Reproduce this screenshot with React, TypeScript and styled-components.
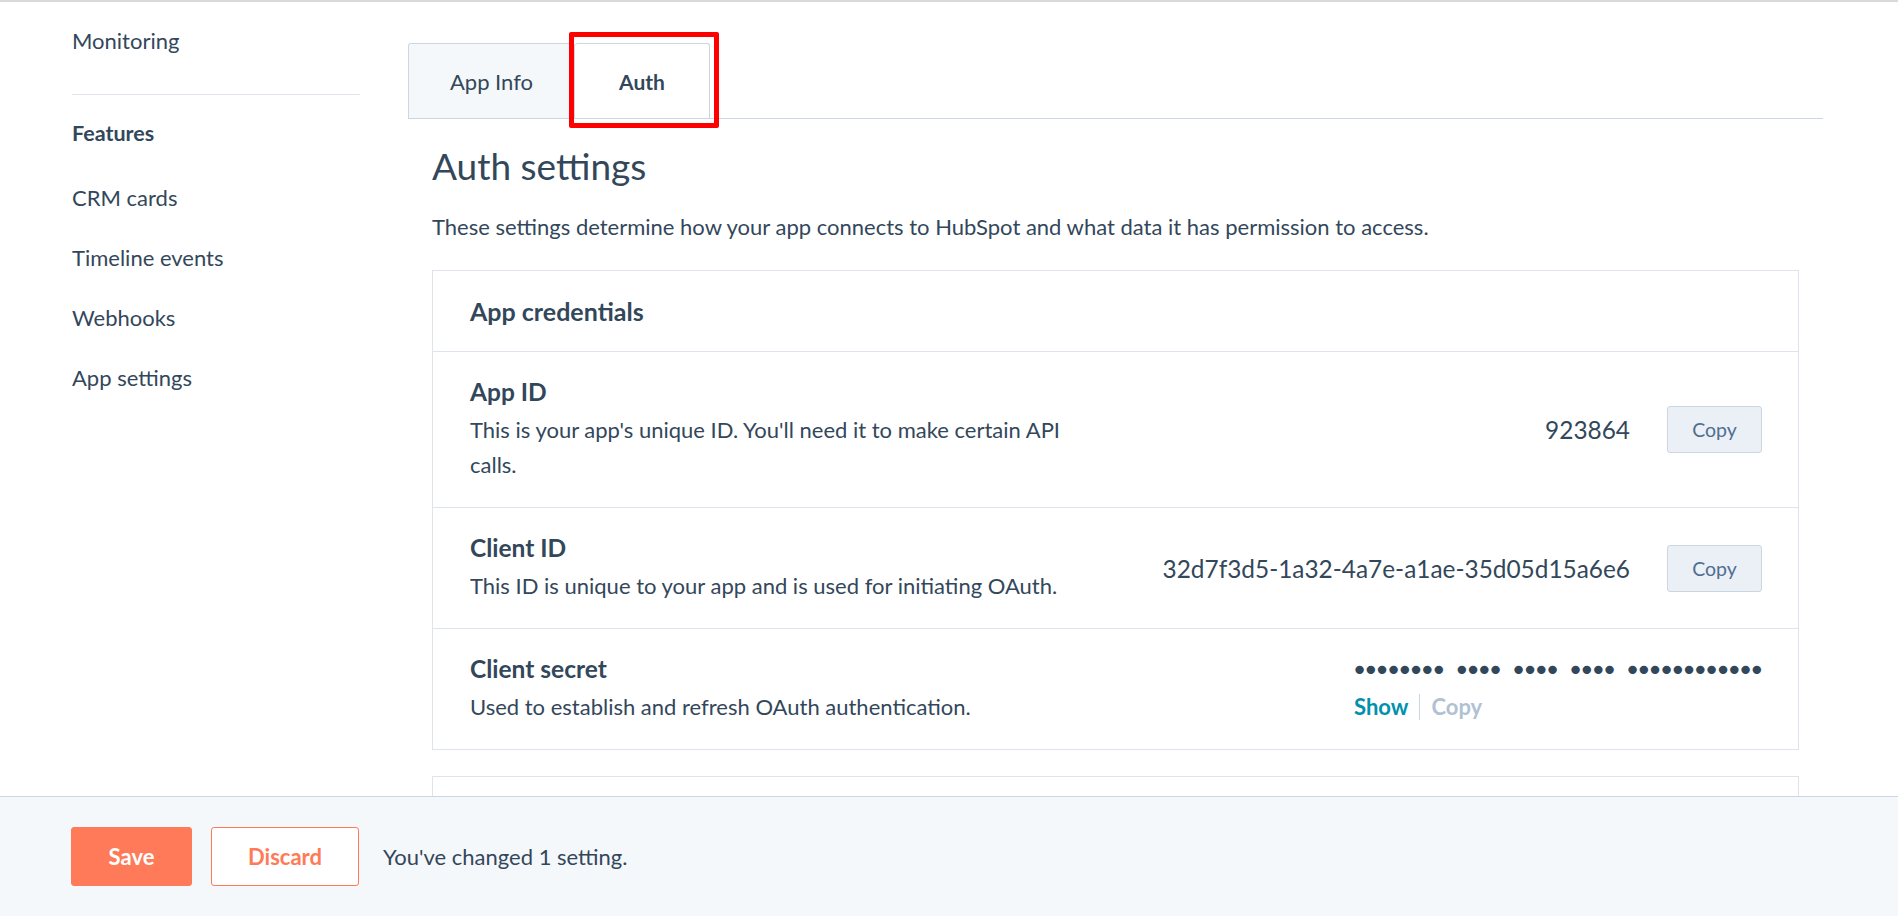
import React from 'react';
import styled, { createGlobalStyle } from 'styled-components';

const NAV_ITEMS = ['CRM cards', 'Timeline events', 'Webhooks', 'App settings'];

const CREDENTIALS = [
  {
    title: 'App ID',
    description: "This is your app's unique ID. You'll need it to make certain API calls.",
    value: '923864',
  },
  {
    title: 'Client ID',
    description: 'This ID is unique to your app and is used for initiating OAuth.',
    value: '32d7f3d5-1a32-4a7e-a1ae-35d05d15a6e6',
  },
];

const SECRET_MASK = '•••••••• •••• •••• •••• ••••••••••••';

export default function App() {
  return (
    <>
      <GlobalStyle />
      <Page>
        <Sidebar>
          <NavLink>Monitoring</NavLink>
          <NavDivider />
          <NavHeading>Features</NavHeading>
          {NAV_ITEMS.map((item) => (
            <NavLink key={item}>{item}</NavLink>
          ))}
        </Sidebar>

        <Main>
          <TabBar>
            <Tab>App Info</Tab>
            <Tab $active>
              Auth
              <Highlight />
            </Tab>
          </TabBar>

          <Content>
            <PageTitle>Auth settings</PageTitle>
            <Intro>
              These settings determine how your app connects to HubSpot and what data it has permission to access.
            </Intro>

            <Card>
              <CardHeader>App credentials</CardHeader>
              {CREDENTIALS.map((row) => (
                <Row key={row.title}>
                  <RowText>
                    <RowTitle>{row.title}</RowTitle>
                    <RowDescription>{row.description}</RowDescription>
                  </RowText>
                  <RowValue>
                    <ValueText>{row.value}</ValueText>
                    <CopyButton>Copy</CopyButton>
                  </RowValue>
                </Row>
              ))}
              <Row>
                <RowText>
                  <RowTitle>Client secret</RowTitle>
                  <RowDescription>Used to establish and refresh OAuth authentication.</RowDescription>
                </RowText>
                <SecretBox>
                  <SecretMask>{SECRET_MASK}</SecretMask>
                  <SecretActions>
                    <TextAction>Show</TextAction>
                    <ActionDivider />
                    <TextAction $disabled>Copy</TextAction>
                  </SecretActions>
                </SecretBox>
              </Row>
            </Card>

            <Card $tall />
          </Content>
        </Main>
      </Page>

      <Footer>
        <SaveButton>Save</SaveButton>
        <DiscardButton>Discard</DiscardButton>
        <FooterNote>You've changed 1 setting.</FooterNote>
      </Footer>
    </>
  );
}

const GlobalStyle = createGlobalStyle`
  html, body {
    margin: 0;
    padding: 0;
    overflow: hidden;
    background: #ffffff;
  }

  body {
    font-family: Lato, "Liberation Sans", sans-serif;
    color: #33475b;
    -webkit-font-smoothing: antialiased;
  }

  * {
    box-sizing: border-box;
  }
`;

const Page = styled.div`
  display: flex;
  align-items: flex-start;
  border-top: 2px solid #dadada;
  height: 916px;
  overflow: hidden;
`;

const Sidebar = styled.nav`
  width: 360px;
  flex-shrink: 0;
  padding: 24px 0 0 72px;
  display: flex;
  flex-direction: column;
`;

const NavLink = styled.a`
  display: block;
  font-size: 22px;
  line-height: 30px;
  margin-bottom: 30px;
  color: #33475b;
  cursor: pointer;

  &:first-child {
    margin-bottom: 0;
  }
`;

const NavDivider = styled.div`
  height: 1px;
  background: #dfe3eb;
  margin: 38px 0 23px;
`;

const NavHeading = styled.div`
  font-size: 21.5px;
  line-height: 30px;
  font-weight: 700;
  margin-bottom: 35px;
`;

const Main = styled.main`
  flex: 1;
  margin-left: 48px;
  margin-right: 75px;
  padding-top: 41px;
`;

const TabBar = styled.div`
  display: flex;
  border-bottom: 1px solid #cbd6e2;
`;

const Tab = styled.div<{ $active?: boolean }>`
  position: relative;
  height: 75px;
  display: flex;
  align-items: center;
  justify-content: center;
  padding: 0 30px;
  min-width: ${(p) => (p.$active ? '135px' : '167px')};
  font-size: ${(p) => (p.$active ? '21px' : '22px')};
  font-weight: ${(p) => (p.$active ? 700 : 400)};
  color: #33475b;
  background: ${(p) => (p.$active ? '#ffffff' : '#f5f8fa')};
  border: 1px solid #cbd6e2;
  border-bottom: none;
  border-left: ${(p) => (p.$active ? 'none' : '1px solid #cbd6e2')};
  border-radius: 3px 3px 0 0;
  margin-bottom: ${(p) => (p.$active ? '-1px' : '0')};
  cursor: pointer;
`;

const Highlight = styled.span`
  position: absolute;
  top: -12px;
  left: -6px;
  right: -10px;
  bottom: -10px;
  border: 5px solid #ff0000;
  border-radius: 2px;
  pointer-events: none;
`;

const Content = styled.div`
  padding: 0 24px;
`;

const PageTitle = styled.h1`
  margin: 25px 0 0;
  font-size: 37px;
  line-height: 44px;
  font-weight: 400;
  color: #33475b;
`;

const Intro = styled.p`
  margin: 25px 0 0;
  font-size: 22px;
  line-height: 28px;
`;

const Card = styled.section<{ $tall?: boolean }>`
  margin-top: ${(p) => (p.$tall ? '26px' : '29px')};
  border: 1px solid #dfe3eb;
  height: ${(p) => (p.$tall ? '220px' : 'auto')};
`;

const CardHeader = styled.h2`
  margin: 0;
  height: 80px;
  display: flex;
  align-items: center;
  padding: 0 37px;
  font-size: 25px;
  font-weight: 700;
  color: #33475b;
`;

const Row = styled.div`
  display: flex;
  justify-content: space-between;
  align-items: center;
  padding: 25px 36px 25px 37px;
  border-top: 1px solid #dfe3eb;
`;

const RowText = styled.div`
  max-width: 600px;
  align-self: flex-start;
`;

const RowTitle = styled.h3`
  margin: 0;
  font-size: 24.5px;
  line-height: 30px;
  font-weight: 700;
  color: #33475b;
`;

const RowDescription = styled.p`
  margin: 5px 0 0;
  font-size: 22px;
  line-height: 35px;
`;

const RowValue = styled.div`
  display: flex;
  align-items: center;
  gap: 37px;
`;

const ValueText = styled.span`
  font-size: 24.4px;
  color: #33475b;
`;

const CopyButton = styled.button`
  width: 95px;
  height: 47px;
  background: #eaf0f6;
  border: 1px solid #cbd6e2;
  border-radius: 3px;
  font-family: inherit;
  font-size: 19.5px;
  color: #506e91;
  cursor: pointer;
`;

const SecretBox = styled.div`
  width: 408px;
  display: flex;
  flex-direction: column;
  align-self: flex-start;
`;

const SecretMask = styled.div`
  height: 30px;
  font-family: "DejaVu Sans", sans-serif;
  font-size: 29px;
  line-height: 33px;
  letter-spacing: -5.8px;
  word-spacing: 8.3px;
  white-space: nowrap;
  color: #33475b;
  margin-left: -3px;
`;

const SecretActions = styled.div`
  display: flex;
  align-items: center;
  height: 35px;
  margin-top: 5px;
`;

const TextAction = styled.span<{ $disabled?: boolean }>`
  font-size: 22px;
  font-weight: 700;
  color: ${(p) => (p.$disabled ? '#b0c1d4' : '#0091ae')};
  cursor: ${(p) => (p.$disabled ? 'default' : 'pointer')};
`;

const ActionDivider = styled.span`
  width: 1px;
  height: 26px;
  background: #cbd6e2;
  margin: 0 11px;
`;

const Footer = styled.footer`
  position: fixed;
  left: 0;
  right: 0;
  bottom: 0;
  height: 120px;
  display: flex;
  align-items: center;
  padding-left: 71px;
  background: #f5f8fa;
  border-top: 1px solid #cbd6e2;
`;

const SaveButton = styled.button`
  width: 121px;
  height: 59px;
  background: #ff7a59;
  border: 1px solid #ff7a59;
  border-radius: 3px;
  color: #ffffff;
  font-family: inherit;
  font-size: 22px;
  font-weight: 700;
  cursor: pointer;
`;

const DiscardButton = styled.button`
  width: 148px;
  height: 59px;
  margin-left: 19px;
  background: #ffffff;
  border: 1px solid #ff7a59;
  border-radius: 3px;
  color: #ff7a59;
  font-family: inherit;
  font-size: 22px;
  font-weight: 700;
  cursor: pointer;
`;

const FooterNote = styled.span`
  margin-left: 24px;
  font-size: 22px;
  color: #33475b;
`;
